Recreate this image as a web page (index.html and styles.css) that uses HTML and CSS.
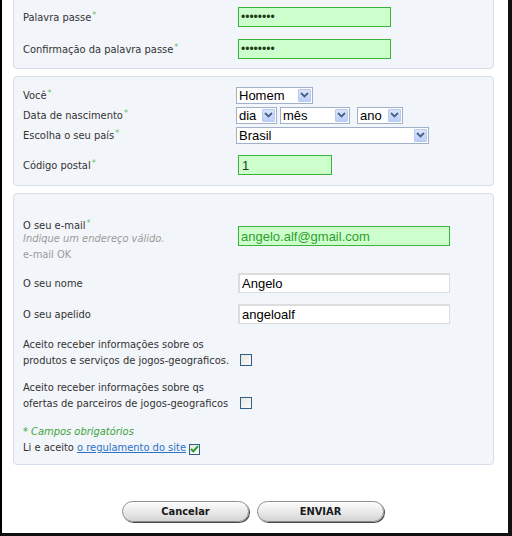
FILE: index.html
```html
<!DOCTYPE html>
<html>
<head>
<meta charset="utf-8">
<link rel="stylesheet" href="styles.css">
</head>
<body>
<div class="frame">
  <div class="panel p1">
    <div class="row">
      <span class="lbl">Palavra passe<span class="req">*</span></span>
      <span class="txt ok pw w153">••••••••</span>
    </div>
    <div class="row">
      <span class="lbl">Confirmação da palavra passe<span class="req">*</span></span>
      <span class="txt ok pw w153">••••••••</span>
    </div>
  </div>

  <div class="panel p2">
    <div class="srow">
      <span class="lbl">Você<span class="req">*</span></span>
      <span class="sel w77"><span class="val">Homem</span><span class="arr"><svg width="9" height="6" viewBox="0 0 9 6"><path d="M1 1 L4.5 4.5 L8 1" fill="none" stroke="#4b5f86" stroke-width="1.8"/></svg></span></span>
    </div>
    <div class="srow">
      <span class="lbl">Data de nascimento<span class="req">*</span></span>
      <span class="sel w41"><span class="val">dia</span><span class="arr"><svg width="9" height="6" viewBox="0 0 9 6"><path d="M1 1 L4.5 4.5 L8 1" fill="none" stroke="#4b5f86" stroke-width="1.8"/></svg></span></span>
      <span class="sel w70 g3"><span class="val">mês</span><span class="arr"><svg width="9" height="6" viewBox="0 0 9 6"><path d="M1 1 L4.5 4.5 L8 1" fill="none" stroke="#4b5f86" stroke-width="1.8"/></svg></span></span>
      <span class="sel w46 g7"><span class="val">ano</span><span class="arr"><svg width="9" height="6" viewBox="0 0 9 6"><path d="M1 1 L4.5 4.5 L8 1" fill="none" stroke="#4b5f86" stroke-width="1.8"/></svg></span></span>
    </div>
    <div class="srow">
      <span class="lbl">Escolha o seu país<span class="req">*</span></span>
      <span class="sel w193"><span class="val">Brasil</span><span class="arr"><svg width="9" height="6" viewBox="0 0 9 6"><path d="M1 1 L4.5 4.5 L8 1" fill="none" stroke="#4b5f86" stroke-width="1.8"/></svg></span></span>
    </div>
    <div class="row postal">
      <span class="lbl">Código postal<span class="req">*</span></span>
      <span class="txt ok w94 dark">1</span>
    </div>
  </div>

  <div class="panel p3">
    <div class="erow">
      <div class="lbl">
        <div class="line">O seu e-mail<span class="req">*</span></div>
        <div class="line hint">Indique um endereço válido.</div>
        <div class="line okmsg">e-mail OK</div>
      </div>
      <span class="txt ok w212 green emailin">angelo.alf@gmail.com</span>
    </div>
    <div class="row nome">
      <span class="lbl">O seu nome</span>
      <span class="txt plain w212">Angelo</span>
    </div>
    <div class="row apelido">
      <span class="lbl">O seu apelido</span>
      <span class="txt plain w212">angeloalf</span>
    </div>
    <div class="crow c1">
      <div class="lbl">
        <div class="line">Aceito receber informações sobre os</div>
        <div class="line">produtos e serviços de jogos-geograficos.</div>
      </div>
      <span class="cb"></span>
    </div>
    <div class="crow c2">
      <div class="lbl">
        <div class="line">Aceito receber informações sobre qs</div>
        <div class="line">ofertas de parceiros de jogos-geograficos</div>
      </div>
      <span class="cb"></span>
    </div>
    <div class="line mand">* Campos obrigatórios</div>
    <div class="line accept">Li e aceito <a class="link" href="#">o regulamento do site</a> <span class="cb checked"><svg width="9" height="8" viewBox="0 0 9 8"><path d="M1 4 L3.4 6.4 L8 1.2" fill="none" stroke="#1f9e1f" stroke-width="1.9"/></svg></span></div>
  </div>

  <div class="btns">
    <span class="btn">Cancelar</span>
    <span class="btn">ENVIAR</span>
  </div>
</div>
</body>
</html>
```

FILE: styles.css
```css
html, body {
  margin: 0;
  padding: 0;
  background: #fff;
}
.frame {
  width: 512px;
  height: 536px;
  box-sizing: border-box;
  border-left: 2px solid #000;
  border-right: 4px solid #111;
  border-bottom: 3px solid #111;
  overflow: hidden;
  background: #fff;
  font-family: "DejaVu Sans Condensed", "DejaVu Sans", sans-serif;
  font-size: 11px;
  color: #333;
}
.panel {
  margin: 7px 14px 0 11px;
  background: #f2f5f9;
  border: 1px solid #d6dee9;
  border-radius: 4px;
  padding: 9px 9px 9px 9px;
}
.p1 {
  margin-top: -10px;
  padding-top: 16px;
  display: flex;
  flex-direction: column;
  gap: 12px;
}
.p2 {
  padding-bottom: 10px;
}
.p3 {
  padding-top: 21px;
  padding-bottom: 8px;
}
.row {
  display: flex;
  align-items: center;
  height: 20px;
}
.srow {
  display: flex;
  align-items: center;
  height: 18px;
  margin-bottom: 2px;
}
.postal {
  margin-top: 11px;
}
.lbl {
  width: 213px;
  flex: none;
}
.req {
  color: #66c266;
  font-size: 9px;
  vertical-align: 3px;
  margin-left: 1px;
}
.txt {
  margin-left: 2px;
  height: 20px;
  box-sizing: border-box;
  display: flex;
  align-items: center;
  padding-left: 2px;
  font-family: "Liberation Sans", Arial, sans-serif;
  font-size: 13px;
  color: #000;
}
.ok {
  background: #ccffcc;
  border: 1px solid #3cb43c;
}
.pw {
  font-size: 12px;
  color: #1a3d1a;
  padding-left: 2px;
}
.dark {
  color: #1e3a1e;
  padding-left: 3px;
}
.green {
  color: #2f9e2f;
}
.plain {
  background: #fff;
  border: 2px solid #dcdcdc;
  border-width: 2px 1px 1px 2px;
  padding-left: 2px;
}
.w153 { width: 153px; }
.w94 { width: 94px; }
.w212 { width: 212px; }
.sel {
  height: 17px;
  box-sizing: border-box;
  border: 1px solid #9fb0c8;
  background: #fff;
  display: flex;
  align-items: center;
  justify-content: space-between;
  font-family: "Liberation Sans", Arial, sans-serif;
  font-size: 13px;
  color: #000;
  padding: 0 1px 0 2px;
}
.w77 { width: 77px; }
.w41 { width: 41px; }
.w70 { width: 70px; }
.w46 { width: 46px; }
.w193 { width: 193px; }
.g3 { margin-left: 3px; }
.g7 { margin-left: 7px; }
.arr {
  width: 13px;
  height: 13px;
  box-sizing: border-box;
  border: 1px solid #b9c9ee;
  border-radius: 1px;
  background: linear-gradient(#dbe5fd, #bccffa);
  display: flex;
  align-items: center;
  justify-content: center;
}
.line {
  line-height: 16px;
  height: 16px;
  white-space: nowrap;
}
.erow {
  display: flex;
  align-items: flex-start;
}
.emailin {
  margin-top: 11px;
}
.hint {
  font-style: italic;
  color: #9a9a9a;
}
.okmsg {
  color: #9a9a9a;
}
.nome {
  margin-top: 10px;
}
.apelido {
  margin-top: 11px;
}
.crow {
  display: flex;
  align-items: flex-end;
}
.c1 {
  margin-top: 13px;
}
.c2 {
  margin-top: 11px;
}
.crow .cb {
  margin-left: 4px;
  margin-bottom: 3px;
}
.cb {
  display: inline-flex;
  align-items: center;
  justify-content: center;
  width: 12px;
  height: 12px;
  box-sizing: border-box;
  border: 1px solid #355d86;
  background: linear-gradient(135deg, #e6e6e1, #fbfbfb);
}
.checked {
  vertical-align: -2px;
  width: 11px;
  height: 11px;
}
.mand {
  margin-top: 12px;
  font-style: italic;
  color: #3ea33e;
}
.link {
  color: #2c72c8;
  text-decoration: underline;
}
.btns {
  display: flex;
  gap: 8px;
  margin-top: 36px;
  padding-left: 120px;
}
.btn {
  width: 127px;
  height: 21px;
  box-sizing: border-box;
  border: 1px solid #8c8c8c;
  border-radius: 11px;
  background: linear-gradient(#fcfcfc, #ececec 45%, #d4d4d4);
  box-shadow: 1px 1px 0 #4a4a4a, inset 0 1px 0 #fff;
  display: flex;
  align-items: center;
  justify-content: center;
  font-family: "DejaVu Sans Condensed", "DejaVu Sans", sans-serif;
  font-weight: bold;
  font-size: 11px;
  color: #1a1a1a;
}
```
